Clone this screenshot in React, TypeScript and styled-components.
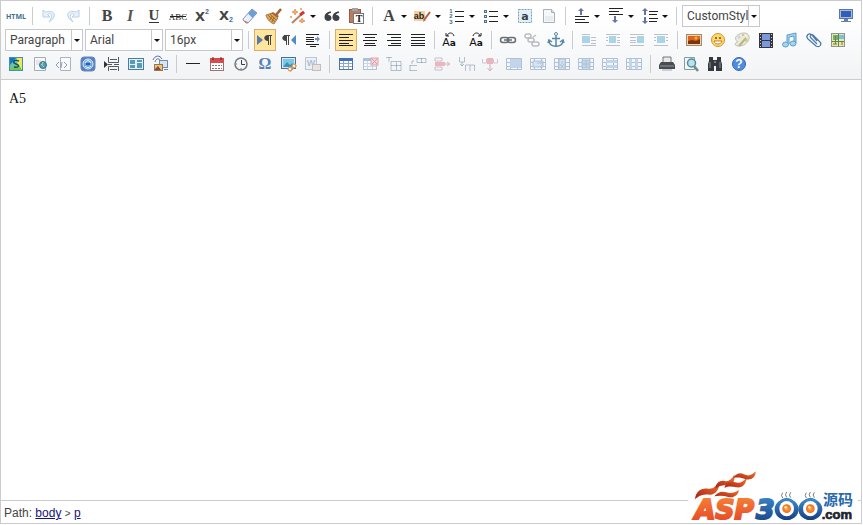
import React from 'react';
import styled, { createGlobalStyle, css } from 'styled-components';

const GlobalStyle = createGlobalStyle`
  *, *::before, *::after { box-sizing: border-box; }
  body { margin: 0; background: #fff; font-family: "Liberation Sans", Arial, sans-serif; }
`;

const Editor = styled.main`
  position: relative;
  display: flex;
  flex-direction: column;
  height: calc(100vh - 1px);
  margin-right: 1px;
  border: 1px solid #ccc;
  background: #fff;
`;

const Toolbar = styled.header`
  padding: 3px;
  border-bottom: 1px solid #ccc;
  background: linear-gradient(#fff 20%, #f1f3f5);
`;

const ToolRow = styled.div`
  display: flex;
  align-items: center;
  height: 24px;
`;

const Spacer = styled.div`
  flex: 1;
`;

const Separator = styled.span`
  flex: none;
  width: 1px;
  height: 18px;
  margin: 0 4px;
  background: #c8cdd2;
`;

const ToolButton = styled.button<{ $active?: boolean; $dim?: boolean; $split?: boolean }>`
  display: flex;
  flex: none;
  align-items: center;
  justify-content: center;
  width: ${(p) => (p.$split ? 32 : 22)}px;
  height: 22px;
  margin: 0 1px;
  padding: 0;
  border: 1px solid transparent;
  background: transparent;
  ${(p) => p.$active && css`
    border-color: #dcac6c;
    background: #ffe69f;
  `}
  ${(p) => p.$dim && css`
    svg { opacity: 0.4; }
  `}
`;

const Glyph = styled.svg`
  display: block;
  flex: none;
  width: 20px;
  height: 20px;
  overflow: visible;
`;

const Caret = styled.svg`
  display: block;
  flex: none;
  width: 10px;
  height: 20px;
`;

const Combo = styled.label`
  display: flex;
  flex: none;
  width: 78px;
  height: 22px;
  margin: 0 1px;
  border: 1px solid #c6c8ca;
  background: #fff;
`;

const ComboSelect = styled.select`
  flex: 1;
  min-width: 0;
  padding: 0 0 0 4px;
  border: 0;
  border-right: 1px solid #c6c8ca;
  outline: 0;
  appearance: none;
  background: transparent;
  color: #444;
  font: 12px/20px Roboto, "Noto Sans", sans-serif;
  text-overflow: clip;
`;

const Content = styled.textarea`
  flex: 1;
  min-height: 0;
  width: 100%;
  padding: 9px 8px;
  border: 0;
  outline: 0;
  resize: none;
  background: #fff;
  color: #111;
  font: 14px/20px "Liberation Serif", serif;
`;

const StatusBar = styled.footer`
  height: 23px;
  padding: 0 3px;
  border-top: 1px solid #ccc;
  color: #444;
  font-size: 12px;
  line-height: 24px;
`;

const PathLink = styled.a`
  color: #14147a;
  text-decoration: underline;
`;

const PathArrow = styled.span`
  font-size: 10px;
`;

const Watermark = styled.svg`
  position: absolute;
  right: 1px;
  bottom: 0;
  width: 180px;
  height: 64px;
`;

const lines = (rows: number[][], color = '#222') =>
  rows.map(([x, y, w], i) => <rect key={i} x={x} y={y} width={w} height="1" fill={color} />);

const up = (x: number, y: number) => (
  <path d={`M${x} ${y}l3 3h-2v4h-2v-4h-2z`} fill="#6474a8" />
);
const down = (x: number, y: number) => (
  <path d={`M${x} ${y}l3-3h-2v-4h-2v4h-2z`} fill="#6474a8" />
);

const grid = (
  <g>
    <rect x="3.5" y="4.5" width="13" height="11" fill="#fff" stroke="#4c74ad" />
    <path d="M3 4h14v3H3z" fill="#3f72b8" />
    <path d="M7.5 7v8M12.5 7v8M4 9.500h12M4 12.500h12" stroke="#8aa9d2" />
  </g>
);

const tableOp = (inner: React.ReactNode) => (
  <g>
    <path d="M2.500 4.500h15v11h-15zM2 8.500h16M2 12.500h16M6.500 4v12M13.500 4v12" fill="none" stroke="#4774a6" />
    {inner}
  </g>
);

const picture = (
  <g>
    <rect x="2.500" y="3.500" width="14" height="11" fill="#dbe7f2" stroke="#467299" />
    <rect x="4" y="5" width="11" height="8" fill="#7cc8e8" />
    <path d="M4 13l4-5 3 3 2-2 2 4z" fill="#3f8fc0" />
  </g>
);

const icons: Record<string, React.ReactNode> = {
  html: <text x="10" y="13" textAnchor="middle" fontFamily="Open Sans, sans-serif" fontWeight="700" fontSize="7" fill="#3f718c">HTML</text>,
  undo: <path d="M4 4v7h7l-2.500-2.500C12 6 15 9 10 16c8-5 7-13-3.500-10z" fill="#c9dff4" stroke="#4d8fc9" />,
  redo: <path d="M16 4v7H9l2.500-2.500C8 6 5 9 10 16 2 11 3 3 13.500 6z" fill="#c9dff4" stroke="#4d8fc9" />,
  bold: <text x="11" y="15" textAnchor="middle" fontFamily="Liberation Serif, serif" fontWeight="700" fontSize="16" fill="#444">B</text>,
  italic: <text x="10" y="15" textAnchor="middle" fontFamily="Liberation Serif, serif" fontWeight="700" fontStyle="italic" fontSize="16" fill="#555">I</text>,
  underline: <g><text x="10" y="14" textAnchor="middle" fontFamily="Liberation Serif, serif" fontSize="15" fontWeight="700" fill="#444">U</text><path d="M5 16.500h10" stroke="#333" /></g>,
  strike: <g><text x="10" y="14" textAnchor="middle" fontFamily="Liberation Serif, serif" fontSize="9" fill="#222">ABC</text><path d="M2 10.500h16" stroke="#222" /></g>,
  sup: <g><text x="8" y="15" textAnchor="middle" fontFamily="DejaVu Sans, sans-serif" fontWeight="700" fontSize="13" fill="#444">X</text><text x="15" y="8" textAnchor="middle" fontFamily="Liberation Sans, sans-serif" fontWeight="700" fontSize="7" fill="#486789">2</text></g>,
  sub: <g><text x="8" y="14" textAnchor="middle" fontFamily="DejaVu Sans, sans-serif" fontWeight="700" fontSize="13" fill="#444">X</text><text x="15" y="16" textAnchor="middle" fontFamily="Liberation Sans, sans-serif" fontWeight="700" fontSize="7" fill="#3e73a8">2</text></g>,
  eraser: <g><path d="M3 13L12 3l5 4-9 10H6l-3-3z" fill="#e9f2fc" stroke="#8395b8" /><path d="M8 7.500L12 3l5 4-4.500 5z" fill="#6f9dd7" /><path d="M3 14l5 2v1H6z" fill="#c57d77" /></g>,
  broom: <g><path d="M12 9l5-6" stroke="#996336" strokeWidth="2.500" /><path d="M9 6l6 4-2 2-7-4z" fill="#b0603e" /><path d="M2 9l6-2 6 5-4 6c-3-1-7-4-8-9z" fill="#d9a352" stroke="#956329" strokeWidth=".7" /><path d="M4 9l7 7M6 8l6 6M8 10l-2 4M10 11l-2 5" stroke="#8d602c" strokeWidth=".7" /></g>,
  wand: <g><path d="M4 17L16 6" stroke="#b78469" strokeWidth="2" /><path d="M12 9l4-3" stroke="#d5362e" strokeWidth="3" /><path d="M7 3l1 2 2 1-2 1-1 2-1-2-2-1 2-1zM14 12l1 2 2 1-2 1-1 1-1-1-2-1 2-1z" fill="#f4ad51" stroke="#cb6d4b" strokeWidth=".5" /><circle cx="13" cy="3" r="1" fill="#ec9440" /><circle cx="3" cy="11" r="1" fill="#ec9440" /></g>,
  quote: <path d="M9 5.500C5 5.500 2.500 8 2.500 11.500c0 4.500 7 4.500 7 .5 0-2.500-1.700-3.300-3.500-3 .4-1.300 1.500-2 3-2zM17 5.500c-4 0-6.500 2.500-6.500 6 0 4.500 7 4.500 7 .5 0-2.500-1.700-3.300-3.500-3 .4-1.300 1.500-2 3-2z" fill="#3f4245" />,
  paste: <g><rect x="3.500" y="3.500" width="11" height="13" fill="#bd7b62" stroke="#965c48" /><rect x="6" y="2" width="6" height="3" fill="#9ca3aa" /><rect x="7.500" y="7.500" width="10" height="10" fill="#fff" stroke="#777" /><text x="13" y="16" textAnchor="middle" fontFamily="Liberation Serif, serif" fontWeight="700" fontSize="10" fill="#222">T</text></g>,
  color: <text x="10" y="15" textAnchor="middle" fontFamily="Liberation Serif, serif" fontWeight="700" fontSize="16" fill="#444">A</text>,
  highlight: <g><rect x="1" y="5" width="11" height="10" fill="#f7cf9e" /><text x="6" y="13" textAnchor="middle" fontFamily="Liberation Sans, sans-serif" fontWeight="700" fontSize="9" fill="#222">ab</text><path d="M11 14l6-8" stroke="#bd5939" strokeWidth="2" /><path d="M10 16l1-3 2 1z" fill="#a17945" /></g>,
  ol: <g>{lines([[8, 5, 9], [8, 10, 9], [8, 15, 9]])}{[6, 11, 17].map((y, i) => <text key={y} x="4" y={y + 1} textAnchor="middle" fontFamily="Liberation Sans, sans-serif" fontWeight="700" fontSize="6" fill="#416b86">{i + 1}</text>)}</g>,
  ul: <g>{lines([[8, 5, 9], [8, 10, 9], [8, 15, 9]])}{[4, 9, 14].map((y) => <rect key={y} x="3.500" y={y + 0.5} width="2" height="2" fill="#dbe6ee" stroke="#4a7089" />)}</g>,
  select: <g><rect x="3.500" y="3.500" width="13" height="13" fill="#e4f0f7" stroke="#70a2bd" strokeDasharray="2 1" /><text x="10" y="14" textAnchor="middle" fontFamily="DejaVu Sans, sans-serif" fontWeight="700" fontSize="11" fill="#3a4248">a</text></g>,
  doc: <g><path d="M4.500 3.500h8l3 3v10h-11z" fill="#f5f8fa" stroke="#a6b0b8" /><path d="M12.500 3.500v3h3" fill="#dfe5ea" stroke="#a6b0b8" /><path d="M6 10h8v5H6z" fill="#e6ecf0" /></g>,
  beforeSpace: <g>{up(9, 2)}{lines([[3, 10, 14], [3, 13, 10], [3, 16, 14]])}</g>,
  afterSpace: <g>{lines([[3, 2, 14], [3, 5, 10], [3, 8, 14]])}{down(9, 17)}</g>,
  lineSpace: <g>{up(5, 2)}{down(5, 18)}{lines([[9, 5, 9], [9, 8, 8], [9, 12, 9], [9, 15, 8]])}</g>,
  fullscreen: <g><rect x="3.500" y="3.500" width="13" height="9" fill="#a9bbdb" stroke="#5878a8" /><path d="M5 5h10v6H5z" fill="#2f5fb8" /><path d="M8 13h4v2h3v1H5v-1h3z" fill="#6a80a6" /></g>,
  ltr: <g><path d="M2 5v10l6-5z" fill="#587caf" /><path d="M12 5.500h5M13.500 5v10M15.500 5v10" stroke="#444" /><path d="M13 5v6c-5 0-5-6 0-6z" fill="#444" /></g>,
  rtl: <g><path d="M17 5v10l-5-5z" fill="#508ac0" /><path d="M5 5.500h6M7.500 5v10M9.500 5v10" stroke="#444" /><path d="M7 5v6c-5 0-5-6 0-6z" fill="#444" /></g>,
  indent: <g>{lines([[3, 4, 13], [3, 7, 8], [3, 9, 8], [3, 11, 8], [3, 14, 13], [7, 16, 6]])}<path d="M12 8h2V6l3 3-3 3v-2h-2z" fill="#7490bd" /></g>,
  left: <g>{lines([[3, 4, 14], [3, 7, 10], [3, 10, 14], [3, 13, 10], [3, 15, 14]])}</g>,
  center: <g>{lines([[3, 4, 14], [5, 7, 10], [3, 10, 14], [5, 13, 10], [4, 15, 12]])}</g>,
  right: <g>{lines([[3, 4, 14], [7, 7, 10], [3, 10, 14], [7, 13, 10], [4, 15, 13]])}</g>,
  justify: <g>{lines([[3, 4, 14], [3, 7, 14], [3, 10, 14], [3, 13, 14], [3, 15, 14]])}</g>,
  upper: <g><text x="8" y="16" textAnchor="middle" fontFamily="DejaVu Sans, sans-serif" fontSize="11" fill="#111">A<tspan fontWeight="700" fontSize="9">a</tspan></text><path d="M6 6c1-4 6-4 7 0M5 3v3h3" fill="none" stroke="#222" /></g>,
  lower: <g><text x="11" y="16" textAnchor="middle" fontFamily="DejaVu Sans, sans-serif" fontSize="11" fill="#111">A<tspan fontWeight="700" fontSize="9">a</tspan></text><path d="M8 6c1-4 6-4 7 0M16 3v3h-3" fill="none" stroke="#222" /></g>,
  link: <g fill="none" stroke="#676f76" strokeWidth="1.500"><rect x="2.500" y="7.500" width="8" height="5" rx="2.500" /><rect x="9.500" y="7.500" width="8" height="5" rx="2.500" /><path d="M6 10h8" /></g>,
  unlink: <g fill="none" stroke="#59626a" strokeWidth="1.500"><rect x="3" y="4" width="6" height="4" rx="2" /><rect x="6" y="8" width="6" height="4" rx="2" /><rect x="10" y="12" width="7" height="4" rx="2" /><path d="M14 5l-3 2" /></g>,
  anchor: <g fill="none" stroke="#5688a5"><circle cx="10" cy="4" r="1.500" /><path d="M10 6v11M6 8.500h8" strokeWidth="1.500" /><path d="M3 11c1 7 13 7 14 0M2 13l1-3 3 2M18 13l-1-3-3 2" strokeWidth="1.500" /></g>,
  imgNone: <g>{lines([[3, 4, 8], [3, 15, 14], [12, 7, 5], [12, 10, 5], [12, 13, 5]], '#668')}<rect x="3" y="6" width="8" height="7" fill="#329fc9" /></g>,
  imgLeft: <g>{lines([[3, 4, 14], [3, 15, 14], [14, 7, 3], [14, 10, 3], [14, 12, 3], [3, 7, 2], [3, 10, 2]], '#668')}<rect x="6" y="6" width="7" height="7" fill="#329fc9" /></g>,
  imgRight: <g>{lines([[3, 4, 14], [3, 15, 14], [3, 7, 6], [3, 10, 6], [3, 12, 6]], '#668')}<rect x="10" y="6" width="7" height="7" fill="#329fc9" /></g>,
  imgCenter: <g>{lines([[3, 4, 14], [3, 15, 14], [3, 7, 2], [3, 10, 2], [15, 7, 2], [15, 10, 2]], '#668')}<rect x="6" y="6" width="8" height="7" fill="#329fc9" /></g>,
  image: <g><rect x="2.500" y="4.500" width="15" height="11" fill="#f1d5a4" stroke="#a38b72" /><rect x="4" y="6" width="12" height="8" fill="#d9661c" /><path d="M4 11l4-1 4 1 4-2v5H4z" fill="#7a3413" /><circle cx="12" cy="8" r="1.500" fill="#ffb338" /></g>,
  smile: <g><circle cx="10" cy="10" r="6.500" fill="#ffd968" stroke="#d89432" /><circle cx="8" cy="8" r="1" fill="#76511e" /><circle cx="12" cy="8" r="1" fill="#76511e" /><path d="M6 11h8c-1 4-7 4-8 0z" fill="#fff" stroke="#a86826" strokeWidth=".8" /></g>,
  scrawl: <g><path d="M17 6c1 5-4 10-10 10-6 0-4-4-1-4-6-4 0-9 6-9 3 0 4 1 5 3z" fill="#eceadc" stroke="#c2c0b0" /><circle cx="7" cy="7" r="1.500" fill="#c8d6dc" /><circle cx="11" cy="5" r="1" fill="#d8b489" /><path d="M7 16l7-8" stroke="#b9b67a" strokeWidth="2" /><circle cx="14" cy="10" r="1.500" fill="#bccb7c" /></g>,
  video: <g><rect x="3" y="3" width="14" height="15" fill="#34363f" /><path d="M6 4h8v6H6zM6 11h8v6H6z" fill="#7b98dc" /><path d="M4.500 4v13M15.500 4v13" stroke="#ccd1da" strokeDasharray="1 2" /></g>,
  music: <g fill="#a4d5ef" stroke="#5b9fcc"><path d="M7 14V5l9-2v10h-2V6L9 7v7z" /><ellipse cx="5.500" cy="14.500" rx="3" ry="2.500" /><ellipse cx="13" cy="13.500" rx="3" ry="2.500" /></g>,
  attach: <path d="M13 11L8 5C5 2 1 6 4 9l8 7c4 2 6-2 4-4L9 5C7 4 5 6 7 8l6 6" fill="none" stroke="#4b78ae" strokeWidth="1.200" />,
  map: <g><rect x="3.500" y="3.500" width="13" height="13" fill="#dcebb8" stroke="#8d958e" /><path d="M5 5h5v5H5z" fill="#79ad65" /><path d="M11 5h5v4h-5z" fill="#7dbddd" /><path d="M5 13h4v2H5zM13 12h2v3h-2z" fill="#dc9c48" /><path d="M10.500 4v12M4 11.500h12M7.500 6v8" stroke="#5d874d" /></g>,
  gmap: <g><rect x="3.500" y="3.500" width="13" height="13" fill="#66c6ad" stroke="#48919d" /><path d="M4 4h6L4 11z" fill="#1574c5" /><path d="M11 4h5v12h-4z" fill="#f0e85c" /><path d="M4 16l5-5h4l3 5z" fill="#6cc858" /><path d="M13 7c-6-2-7 2-3 3s3 4-2 3" fill="none" stroke="#174f66" strokeWidth="1.500" /></g>,
  frame: <g><path d="M4.500 3.500h11v13h-11z" fill="#f6f7f9" stroke="#a3adb8" /><path d="M6 6h5v5H6z" fill="#f0e3e3" /><circle cx="13" cy="11" r="3.500" fill="#559db5" stroke="#37758c" /><path d="M11 10l3 3M13 8l-1 3" stroke="#a6d7b7" /></g>,
  code: <g><path d="M6.500 3.500h10v13h-10z" fill="#fafbfd" stroke="#acb2bd" /><path d="M5 8l-3 3 3 3M10 8l3 3-3 3M8 8l-1 6" fill="none" stroke="#8e9cb5" /></g>,
  webapp: <g><rect x="3" y="3" width="14" height="14" rx="3" fill="#5681c6" stroke="#6b87b8" /><circle cx="10" cy="10" r="5" fill="#6ba7dc" stroke="#dce9f8" /><path d="M7 9c1-3 5-3 6 0M7 12c2 2 4 2 6 0" fill="none" stroke="#fff" /><path d="M8 10h4" stroke="#2d5eac" strokeWidth="2" /></g>,
  pagebreak: <g fill="none" stroke="#535960"><path d="M6.500 3v5.500h10V3M6.500 17v-4.500h10V17M8 5.500h7M8 15.500h7M6 10.500h4M12 10.500h5" /><path d="M2 7l4 3.500L2 14z" fill="#333" stroke="none" /></g>,
  template: <g><rect x="2.500" y="4.500" width="15" height="11" fill="#e5f1f7" stroke="#477c9b" /><path d="M4 6h5v4H4zM11 6h5v2h-5zM4 11h5v3H4zM11 9h5v5h-5z" fill="#5899c0" /></g>,
  background: <g><path d="M3 6c2-5 7-5 9-1M5 8c1-4 4-4 6-1" fill="none" stroke="#586b9b" /><rect x="9.500" y="6.500" width="8" height="7" fill="#d7e5f2" stroke="#718cb1" /><rect x="4.500" y="10.500" width="8" height="6" fill="#f0c46d" stroke="#8c7762" /><path d="M5 15l3-3 3 4H5z" fill="#8d482e" /><path d="M14 15.500h4" stroke="#7187ac" /></g>,
  hr: <path d="M3 9.500h14" stroke="#222" />,
  date: <g><rect x="3.500" y="4.500" width="13" height="12" fill="#fff" stroke="#a56f6f" /><path d="M3 4h14v5H3z" fill="#d84b4b" /><path d="M6 3v3M14 3v3" stroke="#711d1d" /><path d="M5 11.500h10M5 14.500h10" stroke="#777" strokeDasharray="2 1" /></g>,
  time: <g><circle cx="10" cy="10" r="6" fill="#f4f5f6" stroke="#717980" strokeWidth="1.500" /><path d="M10.500 6v4.500H14" fill="none" stroke="#383f45" /><path d="M5 10h1M10 14v1" stroke="#6b747b" /></g>,
  omega: <text x="10" y="15" textAnchor="middle" fontFamily="Liberation Serif, serif" fontWeight="700" fontSize="16" fill="#577fba">Ω</text>,
  snap: <g>{picture}<path d="M11 17l6-6" stroke="#ba8b47" strokeWidth="2" /><circle cx="11" cy="15" r="2" fill="#eee" stroke="#c8903e" /><circle cx="15" cy="12" r="2" fill="#eee" stroke="#c8903e" /></g>,
  word: <g><rect x="2.500" y="3.500" width="11" height="12" fill="#e4edf6" stroke="#647ca3" /><text x="8" y="12" textAnchor="middle" fontFamily="Liberation Sans, sans-serif" fontWeight="700" fontSize="9" fill="#3d69a7">W</text><rect x="9.500" y="10.500" width="8" height="6" fill="#dcc9be" stroke="#786c66" /></g>,
  table: grid,
  tableDelete: <g>{grid}<rect x="11" y="4" width="7" height="7" fill="#f5a4ac" stroke="#b7314b" /><path d="M12 5l5 5M17 5l-5 5" stroke="#a12037" /></g>,
  paraBefore: <g fill="none" stroke="#526d96"><path d="M2 3.500h6M5 3v5M7 7.500h10v9H7zM7 11.500h10M12.500 8v8" /></g>,
  rowInsert: <g fill="none" stroke="#536c94"><path d="M9 4.500h9v4H9zM13.500 4v5M2 11.500h7M2 16.500h7M2 11v6M6 7H4v3" /></g>,
  rowDelete: <g><path d="M3 4h7v3H3zM3 13h7v3H3z" fill="none" stroke="#91707c" /><path d="M3 8h10v4H3z" fill="#e35669" /><path d="M13 10h4M15 8l3 2-3 2" fill="none" stroke="#b74a62" /></g>,
  colInsert: <g fill="none" stroke="#587093"><path d="M3.500 3v5h5V3M6 8v4M4 10l2 2 2-2M9.500 17v-6h9v6M14 11v6" /></g>,
  colDelete: <g><path d="M2.500 5v4h4V5M13.500 5v4h4V5" fill="none" stroke="#a87b8a" /><path d="M7 4h6v6H7z" fill="#dd5068" /><path d="M10 10v6M7.500 14l2.500 3 2.500-3" fill="none" stroke="#b83c5c" /></g>,
  mergeCells: tableOp(<path d="M6 5h11v9H6z" fill="#7aa3d9" />),
  mergeRight: tableOp(<path d="M5 7h10v6H5zM9 9h5M12 7l3 3-3 3" fill="#a9c7e8" stroke="#4774a6" />),
  mergeDown: tableOp(<path d="M7 5h6v9H7zM10 7v5M8 10l2 3 2-3" fill="#a9c7e8" stroke="#4774a6" />),
  splitCells: tableOp(<path d="M6 6h8v8H6zM10 6v8M6 10h8" fill="#7aa3d9" stroke="#4774a6" />),
  splitRows: tableOp(<path d="M6 6h11v3H6zM6 11h11v3H6z" fill="#7aa3d9" />),
  splitCols: tableOp(<path d="M5 5h3v10H5zM11 5h3v10h-3z" fill="#7aa3d9" />),
  print: <g><path d="M6 3h8v6H6z" fill="#e7e9eb" stroke="#777" /><path d="M4 8h12l2 3v4H2v-4z" fill="#484c51" /><path d="M3 12h14" stroke="#91989e" /><path d="M5 15h10v2H5z" fill="#c9cfd4" /></g>,
  preview: <g><path d="M3.500 3.500h10v12h-10z" fill="#f1f6f7" stroke="#8b9ba5" /><path d="M13 12l4 5" stroke="#718791" strokeWidth="2.500" /><circle cx="10.500" cy="9" r="4" fill="#b9e2e9" stroke="#578b99" strokeWidth="1.500" /></g>,
  find: <g fill="#34393f"><path d="M4 3h4v3h4V3h4v4l1 3v7h-6v-5H9v5H3v-7l1-3z" /><path d="M5 8v6M15 8v6" stroke="#87919b" /><path d="M9 8h2" stroke="#b8c1ca" /></g>,
  help: <g><circle cx="10" cy="10" r="6.500" fill="#4f8be3" stroke="#3568b3" /><text x="10" y="14" textAnchor="middle" fontFamily="Liberation Sans, sans-serif" fontWeight="700" fontSize="12" fill="#fff">?</text></g>,
};

const Arrow = () => (
  <Caret viewBox="0 0 10 20" aria-hidden="true">
    <path d="M2 9h6l-3 3z" fill="#111" />
  </Caret>
);

type ToolProps = { name: string; active?: boolean; dim?: boolean; split?: boolean };

const Tool = ({ name, active, dim, split }: ToolProps) => (
  <ToolButton type="button" aria-label={name} aria-pressed={active} $active={active} $dim={dim} $split={split}>
    <Glyph viewBox="0 0 20 20" aria-hidden="true">{icons[name]}</Glyph>
    {split && <Arrow />}
  </ToolButton>
);

/* In a tool list "|" is a separator, "~" marks a dimmed tool, "+" a tool with a menu, "*" a pressed tool. */
const Tools = ({ list }: { list: string }) => (
  <>
    {list.split(' ').map((item, i) =>
      item === '|' ? (
        <Separator key={i} />
      ) : (
        <Tool
          key={i}
          name={item.replace(/^[~+*]/, '')}
          dim={item.startsWith('~')}
          split={item.startsWith('+')}
          active={item.startsWith('*')}
        />
      ),
    )}
  </>
);

const Picker = ({ label, value }: { label: string; value: string }) => (
  <Combo>
    <ComboSelect aria-label={label} defaultValue={value}>
      <option>{value}</option>
    </ComboSelect>
    <Arrow />
  </Combo>
);

const eye = (cx: number) => (
  <g>
    <ellipse cx={cx} cy="151" rx="36" ry="32" fill="url(#deep)" />
    <ellipse cx={cx} cy="149" rx="22" ry="23" fill="#fff" />
    <circle cx={cx} cy="149" r="13" fill="url(#iris)" />
    <circle cx={cx - 3} cy="145" r="4" fill="#ffe6a0" />
    <path d={`M${cx - 12} 117q-7-8 0-16M${cx} 115q-7-8 0-16M${cx + 12} 116q-7-8 0-16`} fill="none" stroke="#777d86" strokeWidth="3" />
  </g>
);

const Logo = () => (
  <Watermark viewBox="0 0 540 192" role="img" aria-label="ASP300 源码 .com">
    <defs>
      <linearGradient id="fire" x1="0" y1="1" x2="1" y2="0">
        <stop offset="0" stopColor="#a81c18" />
        <stop offset="1" stopColor="#f47a28" />
      </linearGradient>
      <linearGradient id="ember" x1="0" y1="0" x2="0" y2="1">
        <stop offset="0" stopColor="#f98639" />
        <stop offset="1" stopColor="#e34425" />
      </linearGradient>
      <linearGradient id="deep" x1="0" y1="0" x2="0" y2="1">
        <stop offset="0" stopColor="#3f8acb" />
        <stop offset="1" stopColor="#163f83" />
      </linearGradient>
      <radialGradient id="iris">
        <stop offset="0" stopColor="#ffae34" />
        <stop offset="1" stopColor="#ed6727" />
      </radialGradient>
    </defs>
    <rect x="24" y="36" width="510" height="150" fill="#fff" />
    <g fill="url(#fire)">
      <path d="M45 121C47 96 64 86 84 89c16 2 26-8 33-23 4 22-8 41-28 41-18-1-29 1-44 14z" />
      <path d="M106 89c2-18 14-26 28-23 12 3 22-5 29-20 4 18-6 35-23 33-12-1-22 1-34 10z" />
      <path d="M133 86c6-16 18-20 32-16 14 4 24-1 34-13 0 18-12 31-30 28-13-3-23-4-36 1z" />
      <path d="M160 57c8-14 20-17 32-11 13 6 23 4 35-9 1 17-13 28-30 24-13-5-24-7-37-4z" />
      <path d="M103 112c9-13 23-17 36-12 13 4 24 2 38-7-2 15-16 25-32 21-14-4-26-5-42-2z" />
    </g>
    <text x="44" y="179" fontFamily="DejaVu Sans, sans-serif" fontWeight="700" fontStyle="italic" fontSize="80" fill="url(#ember)" stroke="url(#ember)" strokeWidth="6">ASP</text>
    <text y="180" fontFamily="DejaVu Sans, sans-serif" fontWeight="700" fontSize="80" fill="url(#deep)" stroke="url(#deep)" strokeWidth="6">
      <tspan x="228" fontStyle="italic">3</tspan>
      <tspan x="292">0</tspan>
      <tspan x="363">0</tspan>
    </text>
    {eye(320)}
    {eye(391)}
    <text x="429" y="137" fontFamily="Noto Sans CJK SC, sans-serif" fontWeight="700" fontSize="45" fill="#2868ad">源码</text>
    <text x="425" y="180" fontFamily="Liberation Sans, sans-serif" fontWeight="700" fontSize="39" fill="#20242d" stroke="#20242d" strokeWidth="2">.com</text>
  </Watermark>
);

export default function App() {
  return (
    <>
      <GlobalStyle />
      <Editor>
        <Toolbar role="toolbar" aria-label="Formatting">
          <ToolRow>
            <Tools list="html | ~undo ~redo | bold italic underline strike sup sub eraser broom +wand quote paste | +color +highlight +ol +ul select doc | +beforeSpace +afterSpace +lineSpace |" />
            <Picker label="Custom style" value="CustomStyl" />
            <Spacer />
            <Tool name="fullscreen" />
          </ToolRow>
          <ToolRow>
            <Picker label="Paragraph format" value="Paragraph" />
            <Picker label="Font family" value="Arial" />
            <Picker label="Font size" value="16px" />
            <Tools list="| *ltr rtl indent | *left center right justify | upper lower | link ~unlink anchor | ~imgNone ~imgLeft ~imgRight ~imgCenter | image smile scrawl video music attach map" />
          </ToolRow>
          <ToolRow>
            <Tools list="gmap frame code webapp pagebreak template background | hr date time omega snap ~word | table ~tableDelete ~paraBefore ~rowInsert ~rowDelete ~colInsert ~colDelete ~mergeCells ~mergeRight ~mergeDown ~splitCells ~splitRows ~splitCols | print preview find help" />
          </ToolRow>
        </Toolbar>
        <Content aria-label="Document" defaultValue="A5" spellCheck={false} />
        <StatusBar>
          Path: <PathLink href="#body">body</PathLink> <PathArrow>&gt;</PathArrow> <PathLink href="#p">p</PathLink>
        </StatusBar>
        <Logo />
      </Editor>
    </>
  );
}
